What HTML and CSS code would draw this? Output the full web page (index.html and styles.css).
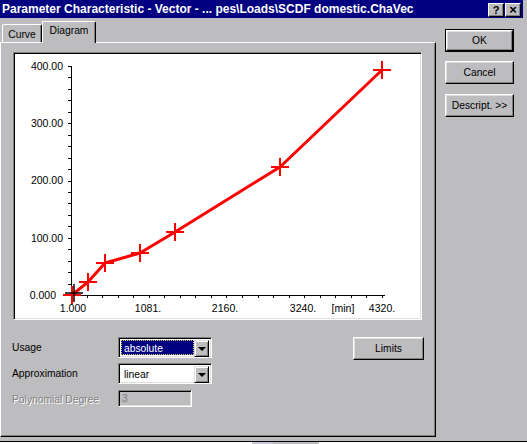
FILE: index.html
```html
<!DOCTYPE html>
<html>
<head>
<meta charset="utf-8">
<link rel="stylesheet" href="styles.css">
</head>
<body>
<div class="win">
  <div class="titlebar">
    <span class="title">Parameter Characteristic - Vector - ... pes\Loads\SCDF domestic.ChaVec</span>
    <div class="tbtns"><span class="tbtn">?</span><span class="tbtn x">×</span></div>
  </div>
  <div class="main">
    <div class="left">
      <div class="tabs">
        <div class="tab">Curve</div>
        <div class="tab active">Diagram</div>
      </div>
      <div class="panel">
        <div class="chart">
          <svg class="plot" width="405" height="264" viewBox="15 54 405 264">
            <g fill="none" stroke="#000" stroke-width="1">
              <path d="M71.5 66V296M71 295.5H385"/>
              <path d="M68 295.5h3M68 284.5h3M68 272.5h3M68 261.5h3M68 249.5h3M68 238.5h3M68 226.5h3M68 215.5h3M68 203.5h3M68 192.5h3M68 181.5h3M68 169.5h3M68 158.5h3M68 146.5h3M68 135.5h3M68 123.5h3M68 112.5h3M68 100.5h3M68 89.5h3M68 77.5h3M68 66.5h3"/>
              <path d="M71.5 295v3M87.5 295v3M102.5 295v3M118.5 295v3M133.5 295v3M149.5 295v3M164.5 295v3M180.5 295v3M195.5 295v3M211.5 295v3M226.5 295v3M242.5 295v3M258.5 295v3M273.5 295v3M289.5 295v3M304.5 295v3M320.5 295v3M335.5 295v3M351.5 295v3M366.5 295v3M382.5 295v3"/>
            </g>
            <g class="lbl" text-anchor="end">
              <text x="63" y="70">400.00</text>
              <text x="63" y="127">300.00</text>
              <text x="63" y="184">200.00</text>
              <text x="63" y="242">100.00</text>
              <text x="56" y="299">0.000</text>
            </g>
            <g class="lbl" text-anchor="middle">
              <text x="73" y="312">1.000</text>
              <text x="148" y="312">1081.</text>
              <text x="225" y="312">2160.</text>
              <text x="303" y="312">3240.</text>
              <text x="343" y="312">[min]</text>
              <text x="382" y="312">4320.</text>
            </g>
            <polyline fill="none" stroke="#ff0000" stroke-width="3" stroke-linejoin="round" points="72,295 88,282 105,263 140,253 175,232 280,167 382,70"/>
            <g fill="none" stroke="#ff0000" stroke-width="2">
              <path d="M63 295h18M72 286v18"/>
              <path d="M79 282h18M88 273v18"/>
              <path d="M96 263h18M105 254v18"/>
              <path d="M131 253h18M140 244v18"/>
              <path d="M166 232h18M175 223v18"/>
              <path d="M271 167h18M280 158v18"/>
              <path d="M373 70h18M382 61v18"/>
            </g>
            <path fill="none" stroke="#000" stroke-width="1.5" d="M65 293h18M74 284v18"/>
          </svg>
        </div>
        <div class="controls">
          <div class="rows">
            <div class="row">
              <span class="lab">Usage</span>
              <div class="combo">
                <span class="ctext sel">absolute</span>
                <span class="dd"><span class="tri"></span></span>
              </div>
            </div>
            <div class="row">
              <span class="lab">Approximation</span>
              <div class="combo">
                <span class="ctext">linear</span>
                <span class="dd"><span class="tri"></span></span>
              </div>
            </div>
            <div class="row r3">
              <span class="lab dis">Polynomial Degree</span>
              <div class="input dis">3</div>
            </div>
          </div>
          <div class="btn limits">Limits</div>
        </div>
      </div>
    </div>
    <div class="side">
      <div class="defwrap"><div class="btn inner">OK</div></div>
      <div class="btn">Cancel</div>
      <div class="btn">Descript. &gt;&gt;</div>
    </div>
  </div>
  <div class="strip">
    <span class="seg a"></span><span class="seg b"></span><span class="seg c"></span>
  </div>
</div>
</body>
</html>
```

FILE: styles.css
```css
* { box-sizing: border-box; }
html, body { margin: 0; padding: 0; }
body {
  width: 527px;
  height: 444px;
  overflow: hidden;
  background: #bdbdbf;
  font-family: "Liberation Sans", Arial, sans-serif;
  font-size: 10.3px;
  color: #000;
}
.win { display: flex; flex-direction: column; height: 444px; }

.titlebar {
  width: 523px;
  height: 18px;
  flex: none;
  background: #000080;
  color: #fff;
  display: flex;
  align-items: flex-start;
  justify-content: space-between;
  padding: 0 2px;
}
.title { font-weight: bold; font-size: 12px; line-height: 18px; white-space: nowrap; }
.tbtns { display: flex; gap: 1px; margin-top: 3px; }
.tbtn {
  width: 16px; height: 14px;
  background: #bdbdbf;
  border: 1px solid; border-color: #fff #000 #000 #fff;
  box-shadow: inset -1px -1px #808080;
  color: #000; font-weight: bold; font-size: 11px; line-height: 12px;
  text-align: center;
}
.tbtn.x { font-size: 13px; }

.main { display: flex; flex: none; height: 419px; }
.left { width: 436px; display: flex; flex-direction: column; }

.tabs { display: flex; height: 24px; padding: 3px 0 0 2px; align-items: flex-end; position: relative; z-index: 1; }
.tab {
  height: 18px; width: 40px;
  border-top: 1px solid #fff; border-left: 1px solid #fff; border-right: 1px solid #000;
  box-shadow: inset -1px 0 #808080;
  border-radius: 2px 2px 0 0;
  text-align: center; line-height: 17px; padding-top: 1px;
}
.tab.active {
  height: 22px; width: 54px; margin-bottom: -1px;
  background: #bdbdbf; line-height: 16px; padding-top: 1px;
}

.panel {
  height: 395px;
  border-top: 1px solid #fff; border-left: 1px solid #fff;
  border-right: 1px solid #000; border-bottom: 1px solid #000;
  box-shadow: inset -1px -1px #808080;
  padding: 9px 12px 0 12px;
}
.chart {
  width: 409px; height: 268px;
  border: 1px solid; border-color: #808080 #fff #fff #808080;
  box-shadow: inset 1px 1px #000, inset -1px -1px #dfdfdf;
  background: #fff;
  padding: 1px;
}
.plot { display: block; }
.lbl text { font-family: "Liberation Sans", Arial, sans-serif; font-size: 10.5px; fill: #000; }

.controls { display: flex; margin: 17px 0 0 -1px; align-items: flex-start; }
.rows { display: flex; flex-direction: column; gap: 5px; }
.row { display: flex; align-items: center; height: 21px; }
.row.r3 { height: 17px; margin-top: 1px; }
.row.r3 .lab { padding-top: 2px; }
.lab { width: 106px; }
.lab.dis { color: #808080; text-shadow: 1px 1px #fff; }

.combo {
  width: 94px; height: 21px;
  border: 1px solid; border-color: #808080 #fff #fff #808080;
  box-shadow: inset 1px 1px #000, inset -1px -1px #dfdfdf;
  background: #fff;
  padding: 2px;
  display: flex;
}
.ctext { flex: 1; padding-left: 3px; line-height: 17px; }
.ctext.sel { background: #000080; color: #fff; outline: 1px dotted #d0d060; outline-offset: -1px; }
.dd {
  width: 15px; height: 17px;
  background: #bdbdbf;
  border: 1px solid; border-color: #dfdfdf #000 #000 #dfdfdf;
  box-shadow: inset 1px 1px #fff, inset -1px -1px #808080;
  display: flex; align-items: center; justify-content: center;
}
.tri { width: 0; height: 0; border-left: 4px solid transparent; border-right: 4px solid transparent; border-top: 4px solid #000; margin-top: 1px; }

.input {
  width: 74px; height: 17px;
  border: 1px solid; border-color: #808080 #fff #fff #808080;
  box-shadow: inset 1px 1px #000, inset -1px -1px #dfdfdf;
  padding-left: 3px; line-height: 15px;
  color: #808080;
}

.btn {
  width: 69px; height: 23px;
  border: 1px solid; border-color: #fff #000 #000 #fff;
  box-shadow: inset -1px -1px #808080, inset 1px 1px #dfdfdf;
  background: #bdbdbf;
  display: flex; align-items: center; justify-content: center;
}
.limits { width: 71px; margin-left: auto; margin-right: -1px; }

.side { display: flex; flex-direction: column; gap: 9px; margin-left: 9px; padding-top: 11px; }
.defwrap { width: 69px; height: 23px; border: 1px solid #000; }
.defwrap .btn.inner { width: 67px; height: 21px; }
.side > .btn + .btn { margin-top: 1px; }

.strip { flex: none; margin-top: 4px; height: 3px; border-top: 1px solid #000; background: #fff; display: flex; }
.seg { height: 2px; }
.seg.a { width: 252px; }
.seg.b { width: 21px; background: #c8c8d8; }
.seg.c { width: 46px; background: #bdbdbf; }
```
